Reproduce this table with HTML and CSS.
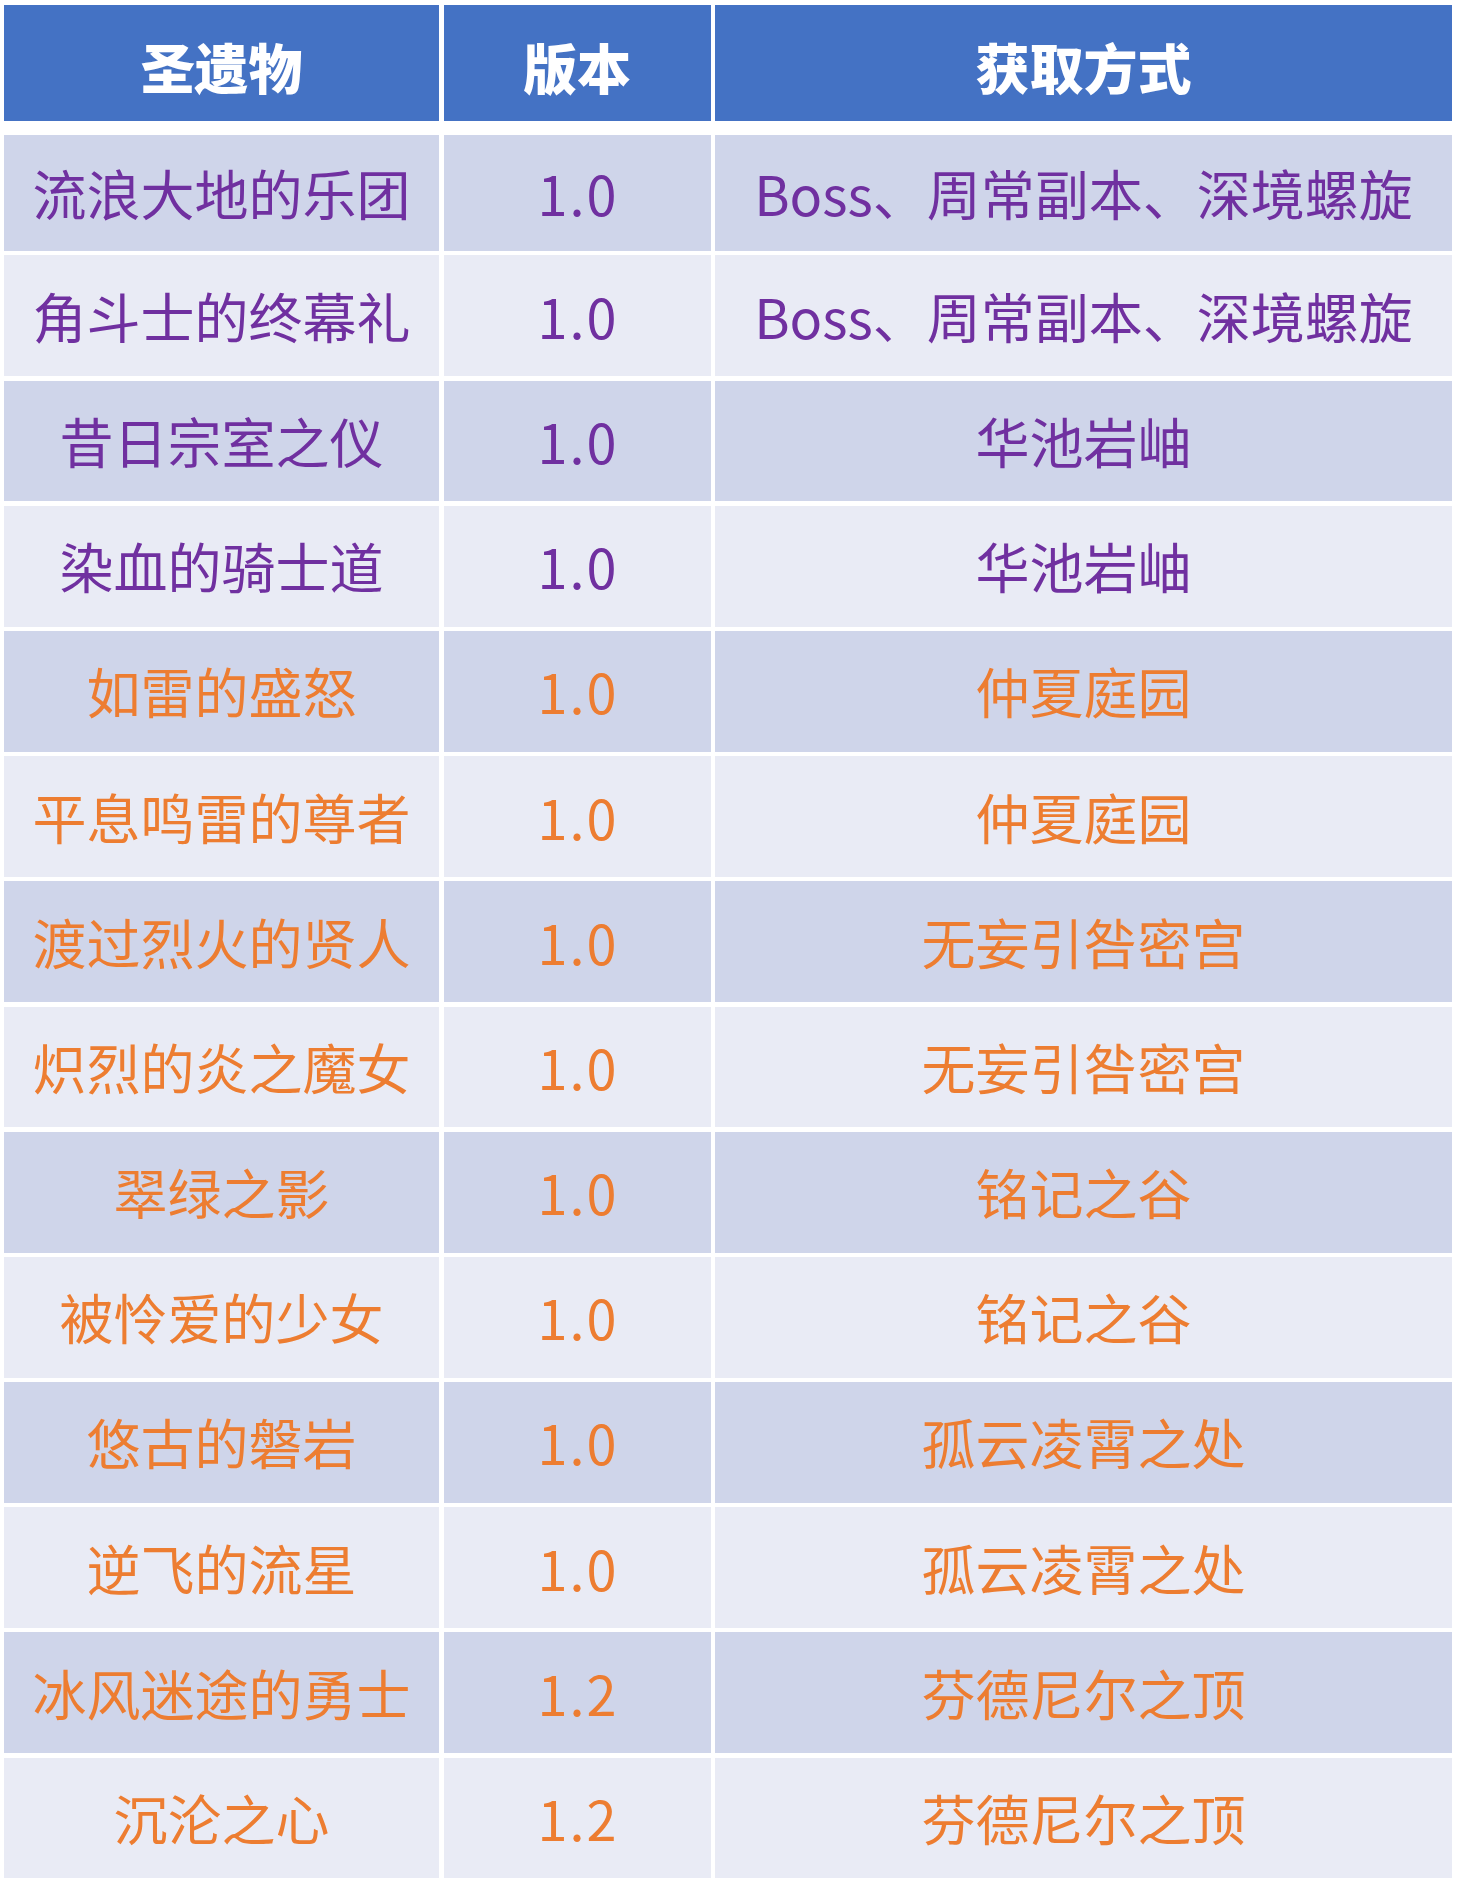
FILE: index.html
```html
<!DOCTYPE html>
<html lang="zh-CN">
<head>
<meta charset="utf-8">
<title>圣遗物</title>
<link rel="stylesheet" href="styles.css">
</head>
<body>
<div class="page">
  <div class="grid head">
    <div class="cell">圣遗物</div>
    <div class="cell">版本</div>
    <div class="cell">获取方式</div>
  </div>
  <div class="grid body">
    <div class="cell odd purple">流浪大地的乐团</div>
    <div class="cell odd purple num">1.0</div>
    <div class="cell odd purple">Boss、周常副本、深境螺旋</div>

    <div class="cell even purple">角斗士的终幕礼</div>
    <div class="cell even purple num">1.0</div>
    <div class="cell even purple">Boss、周常副本、深境螺旋</div>

    <div class="cell odd purple">昔日宗室之仪</div>
    <div class="cell odd purple num">1.0</div>
    <div class="cell odd purple">华池岩岫</div>

    <div class="cell even purple">染血的骑士道</div>
    <div class="cell even purple num">1.0</div>
    <div class="cell even purple">华池岩岫</div>

    <div class="cell odd orange">如雷的盛怒</div>
    <div class="cell odd orange num">1.0</div>
    <div class="cell odd orange">仲夏庭园</div>

    <div class="cell even orange">平息鸣雷的尊者</div>
    <div class="cell even orange num">1.0</div>
    <div class="cell even orange">仲夏庭园</div>

    <div class="cell odd orange">渡过烈火的贤人</div>
    <div class="cell odd orange num">1.0</div>
    <div class="cell odd orange">无妄引咎密宫</div>

    <div class="cell even orange">炽烈的炎之魔女</div>
    <div class="cell even orange num">1.0</div>
    <div class="cell even orange">无妄引咎密宫</div>

    <div class="cell odd orange">翠绿之影</div>
    <div class="cell odd orange num">1.0</div>
    <div class="cell odd orange">铭记之谷</div>

    <div class="cell even orange">被怜爱的少女</div>
    <div class="cell even orange num">1.0</div>
    <div class="cell even orange">铭记之谷</div>

    <div class="cell odd orange">悠古的磐岩</div>
    <div class="cell odd orange num">1.0</div>
    <div class="cell odd orange">孤云凌霄之处</div>

    <div class="cell even orange">逆飞的流星</div>
    <div class="cell even orange num">1.0</div>
    <div class="cell even orange">孤云凌霄之处</div>

    <div class="cell odd orange">冰风迷途的勇士</div>
    <div class="cell odd orange num">1.2</div>
    <div class="cell odd orange">芬德尼尔之顶</div>

    <div class="cell even orange">沉沦之心</div>
    <div class="cell even orange num">1.2</div>
    <div class="cell even orange">芬德尼尔之顶</div>
  </div>
</div>
</body>
</html>
```
FILE: styles.css
```css
html, body {
  margin: 0;
  padding: 0;
  background: #ffffff;
}

.page {
  width: 1464px;
  height: 1887px;
  box-sizing: border-box;
  padding: 5px 12px 0 4px;
  font-family: "Noto Sans CJK SC", "Noto Sans", sans-serif;
}

.grid {
  display: grid;
  grid-template-columns: 435px 267px 737px;
  column-gap: 4.5px;
}

.head {
  grid-template-rows: 116px;
  margin-bottom: 14px;
}

.head .cell {
  background: #4472C4;
  color: #ffffff;
  font-weight: 900;
  padding-top: 8px;
  box-sizing: border-box;
}

.body {
  grid-template-rows: 116px;
  grid-auto-rows: 120.8px;
  row-gap: 4.4px;
}

.cell {
  display: flex;
  align-items: center;
  justify-content: center;
  font-size: 54px;
  line-height: 1;
  white-space: nowrap;
}

.num {
  letter-spacing: 2px;
  padding-left: 2px;
}

.odd { background: #CFD5EA; }
.even { background: #E9EBF5; }

.purple { color: #7030A0; }
.orange { color: #ED7D31; }
```
